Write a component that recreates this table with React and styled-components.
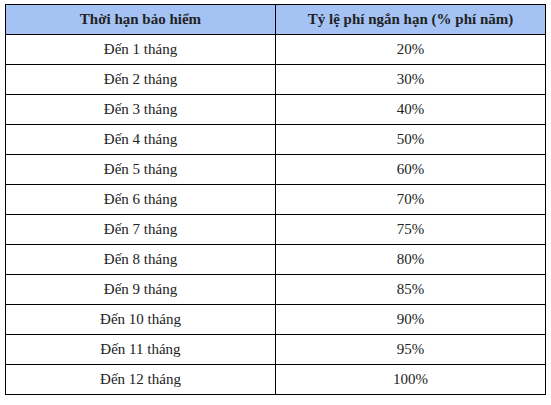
import styled, { createGlobalStyle } from "styled-components";

const rows = [
  ["Đến 1 tháng", "20%"],
  ["Đến 2 tháng", "30%"],
  ["Đến 3 tháng", "40%"],
  ["Đến 4 tháng", "50%"],
  ["Đến 5 tháng", "60%"],
  ["Đến 6 tháng", "70%"],
  ["Đến 7 tháng", "75%"],
  ["Đến 8 tháng", "80%"],
  ["Đến 9 tháng", "85%"],
  ["Đến 10 tháng", "90%"],
  ["Đến 11 tháng", "95%"],
  ["Đến 12 tháng", "100%"],
];

export default function App() {
  return (
    <>
      <GlobalStyle />
      <Table>
        <thead>
          <tr>
            <HeadCell>Thời hạn bảo hiểm</HeadCell>
            <HeadCell>Tỷ lệ phí ngắn hạn (% phí năm)</HeadCell>
          </tr>
        </thead>
        <tbody>
          {rows.map(([term, rate]) => (
            <tr key={term}>
              <Cell>{term}</Cell>
              <Cell>{rate}</Cell>
            </tr>
          ))}
        </tbody>
      </Table>
    </>
  );
}

const GlobalStyle = createGlobalStyle`
  body {
    margin: 0;
    padding: 4px 5px;
    background: #fff;
    font-family: "Liberation Serif", "Times New Roman", serif;
  }
`;

const Table = styled.table`
  width: 541px;
  border-collapse: collapse;
  table-layout: fixed;
  color: #222;
  font-size: 15px;
`;

const HeadCell = styled.th`
  height: 29px;
  padding: 0;
  border: 1px solid #000;
  background: #a4c2f4;
  font-weight: bold;
  text-align: center;
  vertical-align: middle;
`;

const Cell = styled.td`
  height: 29px;
  padding: 0;
  border: 1px solid #000;
  text-align: center;
  vertical-align: middle;
`;
